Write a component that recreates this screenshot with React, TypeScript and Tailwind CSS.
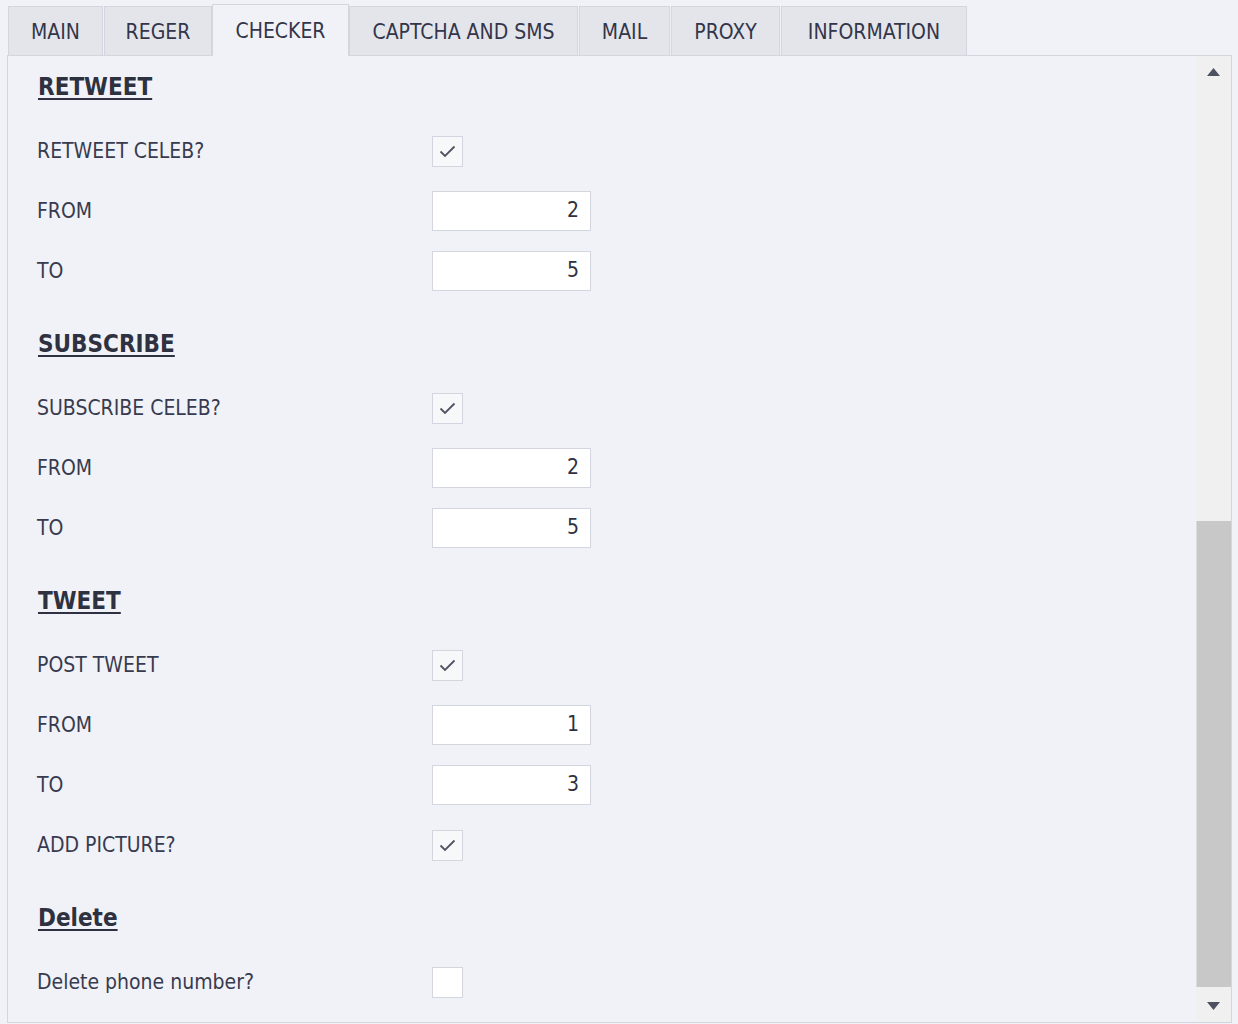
import React from "react";

const tabs = [
  { label: "MAIN", w: "w-[95px]", active: false },
  { label: "REGER", w: "w-[108px]", active: false },
  { label: "CHECKER", w: "w-[137px]", active: true },
  { label: "CAPTCHA AND SMS", w: "w-[229px]", active: false },
  { label: "MAIL", w: "w-[91px]", active: false },
  { label: "PROXY", w: "w-[109px]", active: false },
  { label: "INFORMATION", w: "w-[186px]", active: false },
];

type Row =
  | { kind: "check"; label: string; checked: boolean }
  | { kind: "num"; label: string; value: string };

const sections: { title: string; rows: Row[] }[] = [
  {
    title: "RETWEET",
    rows: [
      { kind: "check", label: "RETWEET CELEB?", checked: true },
      { kind: "num", label: "FROM", value: "2" },
      { kind: "num", label: "TO", value: "5" },
    ],
  },
  {
    title: "SUBSCRIBE",
    rows: [
      { kind: "check", label: "SUBSCRIBE CELEB?", checked: true },
      { kind: "num", label: "FROM", value: "2" },
      { kind: "num", label: "TO", value: "5" },
    ],
  },
  {
    title: "TWEET",
    rows: [
      { kind: "check", label: "POST TWEET", checked: true },
      { kind: "num", label: "FROM", value: "1" },
      { kind: "num", label: "TO", value: "3" },
      { kind: "check", label: "ADD PICTURE?", checked: true },
    ],
  },
  {
    title: "Delete",
    rows: [{ kind: "check", label: "Delete phone number?", checked: false }],
  },
];

function CheckBox({ checked }: { checked: boolean }) {
  return (
    <div
      className={`w-[31px] h-[31px] border border-[#d3d6df] ${
        checked ? "bg-[#f7f8fa]" : "bg-white"
      } flex items-center justify-center`}
    >
      {checked && (
        <svg width="17" height="13" viewBox="0 0 17 13">
          <polyline
            points="1.5,6.5 6,11 15.5,1.5"
            fill="none"
            stroke="#4f5461"
            strokeWidth="1.8"
          />
        </svg>
      )}
    </div>
  );
}

function NumBox({ value }: { value: string }) {
  return (
    <div className="w-[159px] h-[40px] border border-[#d3d6df] bg-white flex items-center justify-end pr-[11px] text-[21px] text-[#2e3140]">
      {value}
    </div>
  );
}

function Triangle({ up }: { up: boolean }) {
  return (
    <svg width="13" height="8" viewBox="0 0 13 8">
      {up ? (
        <polygon points="6.5,0 13,8 0,8" fill="#4d5160" />
      ) : (
        <polygon points="0,0 13,0 6.5,8" fill="#4d5160" />
      )}
    </svg>
  );
}

export default function App() {
  return (
    <div
      className="w-[1238px] h-[1024px] bg-[#f1f2f7] overflow-hidden"
      style={{ fontFamily: '"DejaVu Sans Condensed", "DejaVu Sans", sans-serif' }}
    >
      <div className="relative z-10 flex items-end h-[56px] pl-[8px] gap-[1px]">
        {tabs.map((t) =>
          t.active ? (
            <div
              key={t.label}
              className={`${t.w} h-[52px] border border-b-0 border-[#d3d6df] bg-[#f1f2f7] flex items-center justify-center text-[21px] text-[#33364a] pt-[3px] -mx-[1px]`}
            >
              {t.label}
            </div>
          ) : (
            <div
              key={t.label}
              className={`${t.w} h-[50px] border border-[#d3d6df] bg-[#e4e5ea] flex items-center justify-center text-[21px] text-[#33364a] pt-[3px]`}
            >
              {t.label}
            </div>
          )
        )}
      </div>
      <div className="-mt-px ml-[7px] w-[1225px] h-[968px] border border-[#d3d6df] bg-[#f1f2f7] flex">
        <div className="flex-1 pl-[29px] flex flex-col">
          {sections.map((s, i) => (
            <div key={s.title} className="flex flex-col">
              <div
                className={`${i === 0 ? "pt-[19px]" : "pt-[31px]"} pb-[22px] pl-[1px]`}
              >
                <span className="block leading-[24px] text-[24px] font-bold text-[#2e3140] underline decoration-[2px] underline-offset-[3px]">
                  {s.title}
                </span>
              </div>
              {s.rows.map((r, j) => (
                <div key={j} className="flex items-center h-[60px]">
                  <div className="w-[395px] text-[21px] text-[#383b4f] leading-none">
                    {r.label}
                  </div>
                  {r.kind === "check" ? (
                    <CheckBox checked={r.checked} />
                  ) : (
                    <NumBox value={r.value} />
                  )}
                </div>
              ))}
            </div>
          ))}
        </div>
        <div className="w-[35px] flex flex-col bg-[#f0f0f0]">
          <div className="h-[35px] flex items-center justify-center pb-[3px]">
            <Triangle up />
          </div>
          <div className="flex-1" />
          <div className="h-[466px] bg-[#c8c8c8] border-l border-[#dcdcdc]" />
          <div className="h-[35px] flex items-center justify-center pt-[2px]">
            <Triangle up={false} />
          </div>
        </div>
      </div>
    </div>
  );
}
